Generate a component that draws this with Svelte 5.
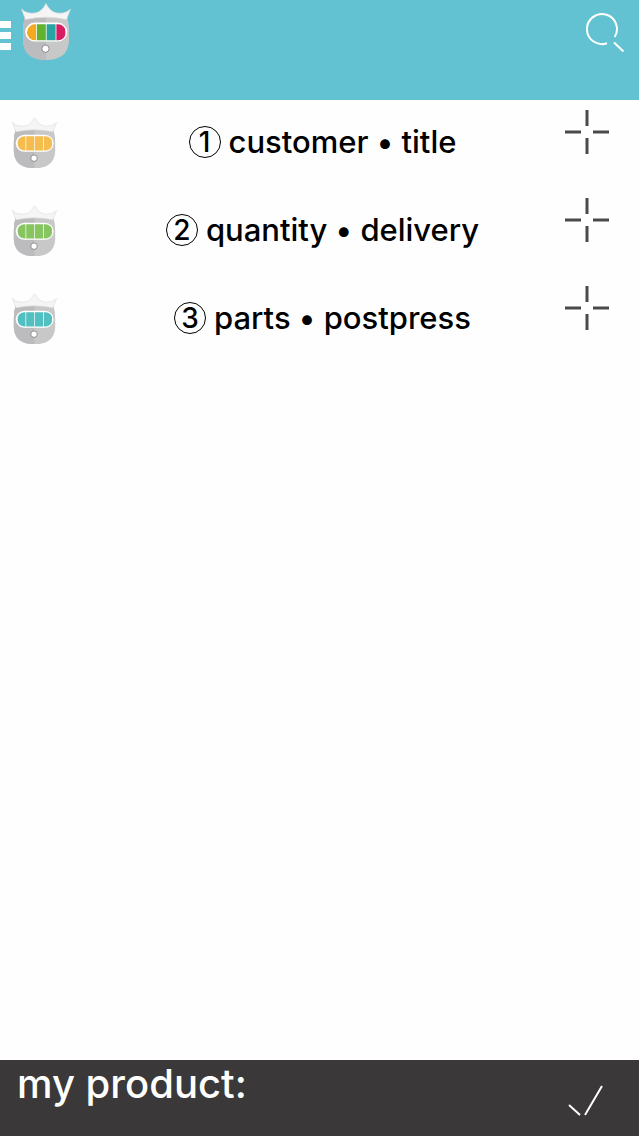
<script lang="ts">
  type Step = { label: string; color: string };

  const steps: Step[] = [
    { label: 'customer • title', color: '#f5bc4e' },
    { label: 'quantity • delivery', color: '#86c560' },
    { label: 'parts • postpress', color: '#52bfc0' },
  ];

  const brand = ['#f4a91f', '#62b22f', '#27a5a5', '#d81e62'];
</script>

{#snippet robot(colors: string[], id: string)}
  <svg class="robot" viewBox="0 0 50 57" aria-hidden="true">
    <clipPath id="visor-{id}">
      <rect x="6" y="21.3" width="39" height="16" rx="8" />
    </clipPath>
    <path d="M4 14H46Q48 20 48 29V38Q47 57 25 57Q3 57 2 38V29Q2 20 4 14Z" fill="#c8c8c8" />
    <path d="M4 14H25V57Q3 57 2 38V29Q2 20 4 14Z" fill="#bcbcbe" />
    <path
      d="M.5 6Q5 11 14 10Q21 9 25 .5Q29 9 36 10Q45 11 49.5 6L45.5 16.5Q25 12 4.5 16.5Z"
      fill="#f5f5f5" stroke="#dedede" stroke-width=".7"
    />
    <rect x="4.2" y="19.6" width="42" height="19" rx="9.5" fill="#fff" />
    <g clip-path="url(#visor-{id})">
      {#each colors as color, i}
        <rect x={6 + i * 9.8} y="21" width="9" height="17" fill={color} />
      {/each}
    </g>
    <circle cx="24.5" cy="45.7" r="3.6" fill="#fff" stroke="#77777c" stroke-width=".8" />
  </svg>
{/snippet}

<div class="app">
  <header>
    <button class="menu" aria-label="Menu">
      <span></span>
      <span></span>
      <span></span>
    </button>
    <a class="logo" href="/" aria-label="Home">{@render robot(brand, 'brand')}</a>
    <button class="search" aria-label="Search">
      <svg width="40" height="40" viewBox="0 0 40 40" aria-hidden="true">
        <path d="M22 30.2A15 15 0 1 1 29.7 24" />
        <path d="M29 29.5L38.5 38.5" />
      </svg>
    </button>
  </header>

  <main>
    {#each steps as step, i}
      <section class="step">
        <div class="icon">{@render robot(Array(4).fill(step.color), `step-${i}`)}</div>
        <h2><span class="mark">{i + 1}</span> {step.label}</h2>
        <button class="add" aria-label="Open {step.label}">
          <svg width="44" height="44" viewBox="0 0 44 44" aria-hidden="true">
            <path d="M22 0V16M22 28V44M0 22H16M28 22H44" />
          </svg>
        </button>
      </section>
    {/each}
  </main>

  <footer>
    <h1>my product:</h1>
    <button class="done" aria-label="Done">
      <svg width="36" height="32" viewBox="0 0 36 32" aria-hidden="true">
        <path d="M1 20L12 30M17 30L34 1" />
      </svg>
    </button>
  </footer>
</div>

<style>
  :global(body) {
    margin: 0;
    background: #fefefe;
  }

  .app {
    min-height: 100vh;
    display: flex;
    flex-direction: column;
    font-family: Inter, "Liberation Sans", Arial, sans-serif;
    color: #000;
  }

  button {
    padding: 0;
    border: 0;
    background: none;
    cursor: pointer;
  }

  svg {
    display: block;
    fill: none;
  }

  header {
    box-sizing: border-box;
    height: 100px;
    display: flex;
    align-items: flex-start;
    padding: 3px 14px 0 0;
    background: #62c2d1;
  }

  .menu {
    display: flex;
    flex-direction: column;
    gap: 4px;
    margin-top: 18px;
  }

  .menu span {
    width: 11px;
    height: 7px;
    background: #fff;
  }

  .logo {
    width: 50px;
    margin-left: 10px;
  }

  .search {
    margin: 10px 0 0 auto;
  }

  .search path {
    stroke: #fff;
    stroke-width: 2;
  }

  main {
    flex: 1;
  }

  .step {
    display: grid;
    grid-template-columns: 80px 1fr 74px;
    height: 88px;
  }

  .icon {
    width: 45px;
    padding: 17px 0 0 12px;
  }

  h1,
  h2 {
    margin: 0;
    font-weight: 500;
  }

  h2 {
    display: flex;
    align-items: center;
    justify-content: center;
    gap: 8px;
    height: 84px;
    font-size: 31px;
    line-height: 82px;
    white-space: nowrap;
  }

  .mark {
    box-sizing: border-box;
    width: 32px;
    height: 32px;
    border: 1px solid #000;
    border-radius: 50%;
    font-size: 28px;
    line-height: 30px;
    text-align: center;
  }

  .add {
    align-self: start;
    justify-self: start;
    margin-top: 10px;
  }

  .add path {
    stroke: #4a4a4c;
    stroke-width: 3;
  }

  footer {
    box-sizing: border-box;
    height: 76px;
    display: flex;
    justify-content: space-between;
    padding: 0 35px 0 17px;
    background: #3a3838;
    color: #fff;
  }

  h1 {
    font-size: 40px;
    line-height: 48px;
  }

  .done {
    align-self: flex-end;
    margin-bottom: 19px;
  }

  .done path {
    stroke: #fff;
    stroke-width: 2;
  }
</style>
